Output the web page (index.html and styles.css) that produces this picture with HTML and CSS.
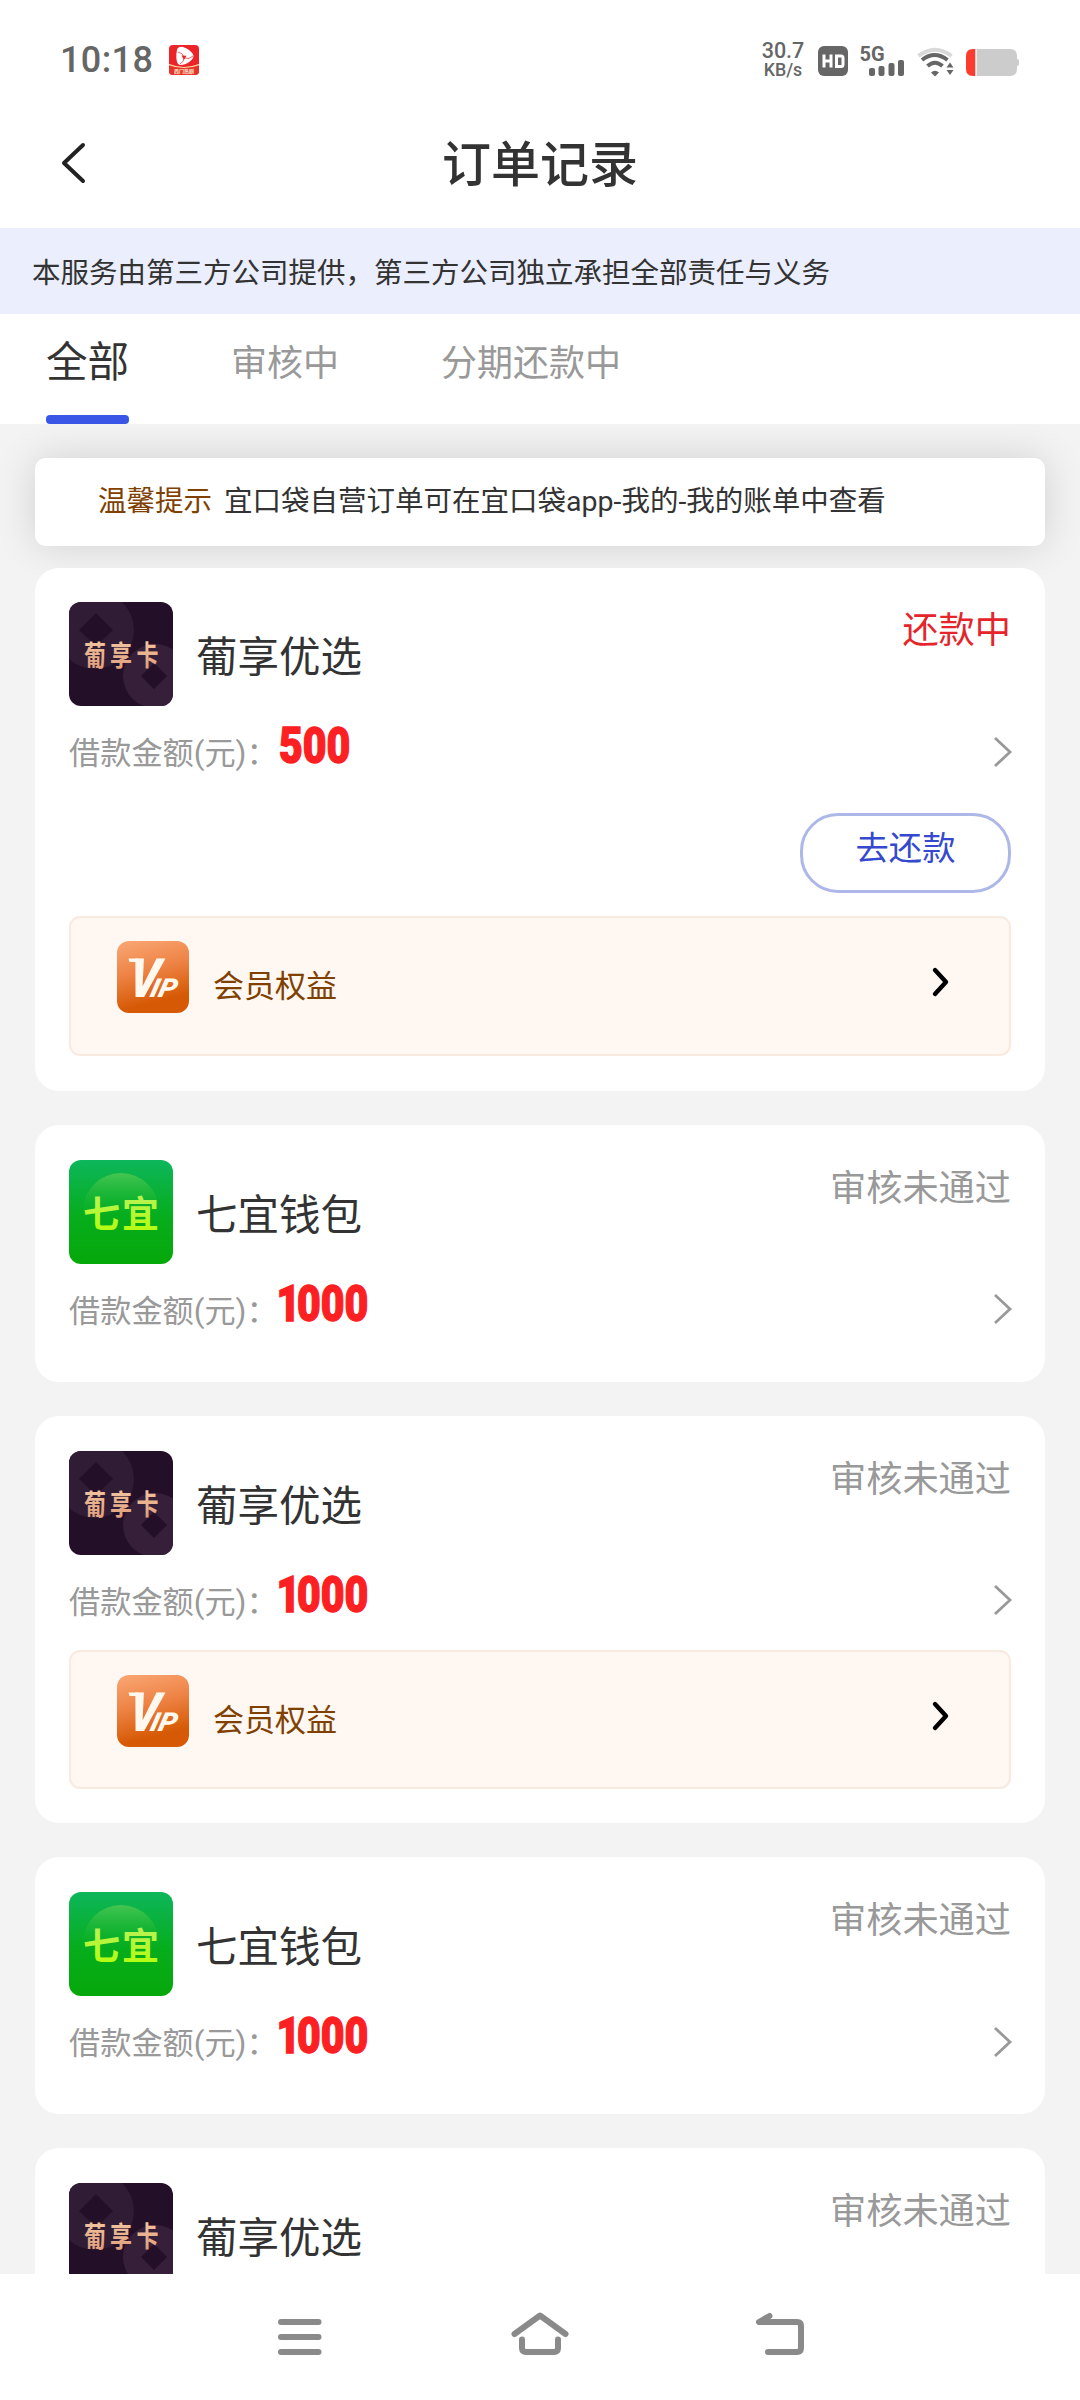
FILE: index.html
```html
<!DOCTYPE html>
<html lang="zh-CN">
<head>
<meta charset="utf-8">
<title>订单记录</title>
<link rel="stylesheet" href="styles.css">
</head>
<body>
<svg class="defs" width="0" height="0" aria-hidden="true">
  <defs>
    <linearGradient id="g-green" x1="0" y1="0" x2="0" y2="1"><stop offset="0" stop-color="#0db65b"/><stop offset=".55" stop-color="#06ad1c"/><stop offset="1" stop-color="#06a80a"/></linearGradient>
    <linearGradient id="g-ball" x1="0" y1="0" x2="0" y2="1"><stop offset="0" stop-color="#45c552"/><stop offset=".6" stop-color="#0aaf1a" stop-opacity="0"/></linearGradient>
    <linearGradient id="g-lime" x1="0" y1="0" x2="0" y2="1"><stop offset="0" stop-color="#b8f15a"/><stop offset="1" stop-color="#b4ff06"/></linearGradient>
    <linearGradient id="g-gold" x1="0" y1="0" x2="0" y2="1"><stop offset="0" stop-color="#f3c7a2"/><stop offset="1" stop-color="#dd9a78"/></linearGradient>
    <linearGradient id="g-vip" x1=".1" y1="0" x2=".35" y2="1"><stop offset="0" stop-color="#f9a673"/><stop offset=".45" stop-color="#ee8345"/><stop offset=".9" stop-color="#d65a05"/></linearGradient>
  </defs>
  <symbol id="logo-pu" viewBox="0 0 104 104">
    <rect width="104" height="104" fill="#230f28"/>
    <circle cx="26" cy="28" r="39" fill="#301c34"/>
    <circle cx="86" cy="74" r="32" fill="#351f39"/>
    <path d="M27 11 44 28 27 44 10 28zM85 61 98 74 85 87 72 74z" fill="#230f28"/>
    <g class="logo-pu-text" fill="url(#g-gold)" transform="translate(0 63.500) scale(1 1.300)"><text x="15" y="0">葡</text><text x="41" y="0">享</text><text x="67.500" y="0">卡</text></g>
  </symbol>
  <symbol id="logo-qi" viewBox="0 0 104 104">
    <rect width="104" height="104" fill="url(#g-green)"/>
    <circle cx="52" cy="51" r="38" fill="url(#g-ball)"/>
    <g class="logo-qi-text" fill="url(#g-lime)"><text x="14" y="67.500">七</text><text x="53" y="67.500">宜</text></g>
  </symbol>
  <symbol id="vip" viewBox="0 0 72 72">
    <rect width="72" height="72" rx="12" fill="url(#g-vip)"/>
    <g fill="#fff8ee"><text class="vip-v" transform="translate(10 56) skewX(-8) scale(.86 1)">V</text><text class="vip-ip" transform="translate(32 55.500) skewX(-14) scale(1.080 1)">IP</text></g>
    <path d="M11.500 17.500h10v3.500h-9z" fill="#fff8ee"/>
  </symbol>
  <symbol id="chev" viewBox="0 0 20 32"><path d="M2 2 17 16 2 30" fill="none" stroke="#999" stroke-width="2.800"/></symbol>
  <symbol id="chev-bold" viewBox="0 0 20 32"><path d="M4 4 15 16 4 28" fill="none" stroke="#000" stroke-width="4.400" stroke-linecap="round" stroke-linejoin="round"/></symbol>
</svg>

<header class="statusbar">
  <span class="clock">10:18</span>
  <svg class="app-badge" width="30" height="30" viewBox="0 0 30 30">
    <rect width="30" height="30" rx="4" fill="#ec2329"/>
    <path d="M8.500 3.500Q10 1.200 14 2 22 4.500 24.500 10.500 25 13 22 15.500 17 20 11 20 8.500 19.500 7.800 16 6.500 9 8.500 3.500z" fill="#fff"/>
    <path d="M9 7q5 1 6 5M24 11q-4 4-8 2M11 19q4-2 4-6" fill="none" stroke="#ec2329" stroke-width=".7"/>
    <path d="m12.500 10.500 5 .2-2.500 4z" fill="#ec2329"/>
    <path d="M0 19q15 6 30 0v7q0 4-4 4H4q-4 0-4-4z" fill="#e5322b"/>
    <path d="M0 19.500q15 6 30 0" fill="none" stroke="#ffd9a0" stroke-width="1.200"/>
    <text class="badge-text" x="5" y="28">西门热剧</text>
  </svg>
  <span class="spacer"></span>
  <span class="speed"><span>30.7</span><span>KB/s</span></span>
  <svg class="sys" width="206" height="36" viewBox="0 0 206 36" fill="#666">
    <rect x="4" y="5" width="30" height="30" rx="6"/>
    <path d="M10 13.500v13M17 13.500v13M10 20h7M22.500 15h4.500q2 0 2 2v6.500q0 2-2 2h-4.500z" fill="none" stroke="#fff" stroke-width="3"/>
    <text class="fiveg" x="45.500" y="20">5G</text>
    <rect x="55" y="27" width="6" height="8" rx="2"/><rect x="64.500" y="25" width="6" height="10" rx="2"/><rect x="74.500" y="22" width="6" height="13" rx="2"/><rect x="84" y="19" width="6" height="16" rx="2"/>
    <g fill="none" stroke-width="4">
      <path d="M104.500 15q16.500-12.500 33 0" stroke="#d9d9d9"/>
      <path d="M108 19q12.500-10 25.500 0" stroke="#666"/><path d="M113.500 25q7.500-6.500 15 0" stroke="#666"/>
    </g>
    <path d="M117 31.500q4-3.500 8 0l-4 4zM136 21.500l3.500 5h-7zM136 34l3.500-5h-7z"/>
    <path d="M159 8h37q7 0 7 7v3q2 0 2 2v3q0 2-2 2v3q0 7-7 7h-37z" fill="#ccc"/>
    <path d="M161 8v27h-2q-7 0-7-7V15q0-7 7-7z" fill="#fd3b2f"/><path d="M162.500 8v27" stroke="#fff" stroke-width="1" opacity=".6"/>
  </svg>
</header>

<nav class="titlebar">
  <svg class="back" width="30" height="44" viewBox="0 0 30 44"><path d="M25 4 6 22 25 40" fill="none" stroke="#222" stroke-width="4" stroke-linecap="round" stroke-linejoin="round"/></svg>
  <h1 class="title">订单记录</h1>
</nav>

<p class="banner">本服务由第三方公司提供，第三方公司独立承担全部责任与义务</p>

<div class="tabs">
  <span class="tab tab-on">全部</span>
  <span class="tab">审核中</span>
  <span class="tab">分期还款中</span>
</div>

<main class="list">
  <div class="notice"><span class="notice-tag">温馨提示</span><span>宜口袋自营订单可在宜口袋app-我的-我的账单中查看</span></div>

  <section class="card card-first">
    <div class="head"><svg class="logo"><use href="#logo-pu"/></svg><h2 class="name">葡享优选</h2><span class="state state-due">还款中</span></div>
    <div class="row"><span class="label">借款金额(元)：</span><span class="amount">500</span><svg class="chev"><use href="#chev"/></svg></div>
    <button class="pay">去还款</button>
    <div class="vip"><svg class="vip-icon"><use href="#vip"/></svg><span class="vip-name">会员权益</span><svg class="chev-bold"><use href="#chev-bold"/></svg></div>
  </section>

  <section class="card">
    <div class="head"><svg class="logo"><use href="#logo-qi"/></svg><h2 class="name">七宜钱包</h2><span class="state">审核未通过</span></div>
    <div class="row"><span class="label">借款金额(元)：</span><span class="amount"><i class="one">1</i>000</span><svg class="chev"><use href="#chev"/></svg></div>
  </section>

  <section class="card">
    <div class="head"><svg class="logo"><use href="#logo-pu"/></svg><h2 class="name">葡享优选</h2><span class="state">审核未通过</span></div>
    <div class="row"><span class="label">借款金额(元)：</span><span class="amount"><i class="one">1</i>000</span><svg class="chev"><use href="#chev"/></svg></div>
    <div class="vip"><svg class="vip-icon"><use href="#vip"/></svg><span class="vip-name">会员权益</span><svg class="chev-bold"><use href="#chev-bold"/></svg></div>
  </section>

  <section class="card">
    <div class="head"><svg class="logo"><use href="#logo-qi"/></svg><h2 class="name">七宜钱包</h2><span class="state">审核未通过</span></div>
    <div class="row"><span class="label">借款金额(元)：</span><span class="amount"><i class="one">1</i>000</span><svg class="chev"><use href="#chev"/></svg></div>
  </section>

  <section class="card">
    <div class="head"><svg class="logo"><use href="#logo-pu"/></svg><h2 class="name">葡享优选</h2><span class="state">审核未通过</span></div>
  </section>
</main>

<footer class="navbar">
  <svg width="60" height="60" viewBox="0 0 60 60"><path d="M11 15h37.500M11 30h37.500M11 45h37.500"/></svg>
  <svg width="60" height="60" viewBox="0 0 60 60"><path d="M4.500 27 30 8.500 55.500 27M12 32.500V41q0 4 4 4h28q4 0 4-4v-8.500"/></svg>
  <svg width="60" height="60" viewBox="0 0 60 60"><path d="M19.500 9 9 15h38q4 0 4 4v22q0 4-4 4H18"/></svg>
</footer>
</body>
</html>
```
FILE: styles.css
```css
* { box-sizing: border-box; margin: 0; padding: 0; }

body {
  width: 1080px;
  height: 2400px;
  display: flex;
  flex-direction: column;
  overflow: hidden;
  background: #fff;
  color: #333;
  font-family: Roboto, "Noto Sans CJK SC", sans-serif;
}

svg { display: block; flex: none; }
.defs { width: 0; height: 0; }
h1, h2 { font-weight: 400; }
i { font-style: normal; }

/* system status bar */
.statusbar {
  height: 100px;
  padding: 20px 60px 0 60px;
  display: flex;
  align-items: center;
  color: #666;
}
.clock { font-size: 36px; font-weight: 500; letter-spacing: 0.4px; width: 109px; }
.badge-text { font-size: 5px; font-weight: 700; fill: #ffe9d0; }
.spacer { flex: 1; }
.speed {
  width: 46px;
  margin-right: 8px;
  display: flex;
  flex-direction: column;
  align-items: center;
  font-size: 21.5px;
  font-weight: 500;
  line-height: 19px;
}
.speed span:last-child { font-size: 17.8px; }
.sys { margin-bottom: 3px; }
.fiveg { font-size: 20px; font-weight: 700; }

/* page title */
.titlebar {
  height: 128px;
  padding: 0 58px;
  display: grid;
  grid-template-columns: 30px 1fr 30px;
  align-items: center;
}
.back { margin-bottom: 2px; }
.title { padding-top: 3px; text-align: center; font-size: 49px; font-weight: 500; line-height: 60px; }

.banner {
  height: 86px;
  padding-left: 32px;
  background: #ebeefd;
  font-size: 28.5px;
  line-height: 91px;
}

.tabs {
  height: 110px;
  padding-left: 46px;
  display: flex;
  gap: 102px;
  color: #999;
  font-size: 36px;
}
.tab { line-height: 100px; }
.tab-on {
  position: relative;
  width: 83px;
  color: #333;
  font-size: 41.5px;
  line-height: 97px;
}
.tab-on::after {
  content: "";
  position: absolute;
  left: 0;
  bottom: 0;
  width: 83px;
  height: 9px;
  border-radius: 4px;
  background: #3a56e6;
}

/* order list */
.list {
  flex: 1;
  min-height: 0;
  padding: 34px 35px 0;
  overflow: hidden;
  background: #f3f3f3;
}
.notice {
  height: 88px;
  margin-bottom: 22px;
  padding-left: 63px;
  display: flex;
  gap: 12px;
  border-radius: 11px;
  background: #fff;
  box-shadow: 0 0 40px rgba(0, 0, 0, 0.14);
  font-size: 28.5px;
  line-height: 87px;
}
.notice-tag { color: #804000; }

.card {
  position: relative;
  margin-bottom: 34px;
  padding: 35px 34px 33px;
  border-radius: 24px;
  background: #fff;
}
.card-first { padding-top: 34px; }
.head { height: 104px; display: flex; }
.logo { width: 104px; height: 104px; border-radius: 12px; }
.logo-pu-text { font-size: 22px; font-weight: 700; }
.logo-qi-text { font-size: 37px; font-weight: 700; }
.name { flex: 1; padding-left: 23px; font-size: 41.5px; line-height: 112px; }
.state { color: #999; font-size: 36.2px; line-height: 58px; }
.state-due { color: #e5252c; }

.row { height: 85px; padding-top: 6px; display: flex; align-items: center; }
.label { width: 210px; margin-bottom: 2px; color: #999; font-size: 31.2px; white-space: nowrap; }
.amount {
  flex: 1;
  height: 61px;
  color: #fc2023;
  font-size: 50px;
  font-weight: 900;
  line-height: 50px;
  -webkit-text-stroke: 1.4px #fc2023;
  transform: scaleX(0.82);
  transform-origin: 0 0;
}
.one { margin-left: -3px; margin-right: -4px; }
.chev { width: 20px; height: 32px; margin-right: -2px; }

.pay {
  display: block;
  width: 211px;
  height: 80px;
  margin: 22px 0 23px auto;
  padding-bottom: 15px;
  border: 3px solid #adb7e8;
  border-radius: 38px;
  background: #fff;
  color: #3549cf;
  font-family: inherit;
  font-size: 33.3px;
}
.vip {
  height: 139.5px;
  margin: 10px 0 1px;
  padding: 23px 58px 0 46px;
  display: flex;
  border: 2px solid #f9eae0;
  border-radius: 11px;
  background: #fff7f1;
}
.card-first .vip { margin-bottom: 2px; }
.vip-icon { width: 72px; height: 72px; }
.vip-name { flex: 1; padding-left: 24px; color: #804000; font-size: 31px; line-height: 91px; }
.chev-bold { width: 20px; height: 32px; margin-top: 25px; }
.vip-v { font: italic 900 54px Roboto, sans-serif; }
.vip-ip { font: italic 900 26px Roboto, sans-serif; }

/* system navigation */
.navbar {
  height: 126px;
  padding: 33px 270px 0;
  display: flex;
  justify-content: space-between;
  background: #fff;
}
.navbar svg { fill: none; stroke: #8a8a8a; stroke-width: 6; stroke-linecap: round; stroke-linejoin: round; }
```
